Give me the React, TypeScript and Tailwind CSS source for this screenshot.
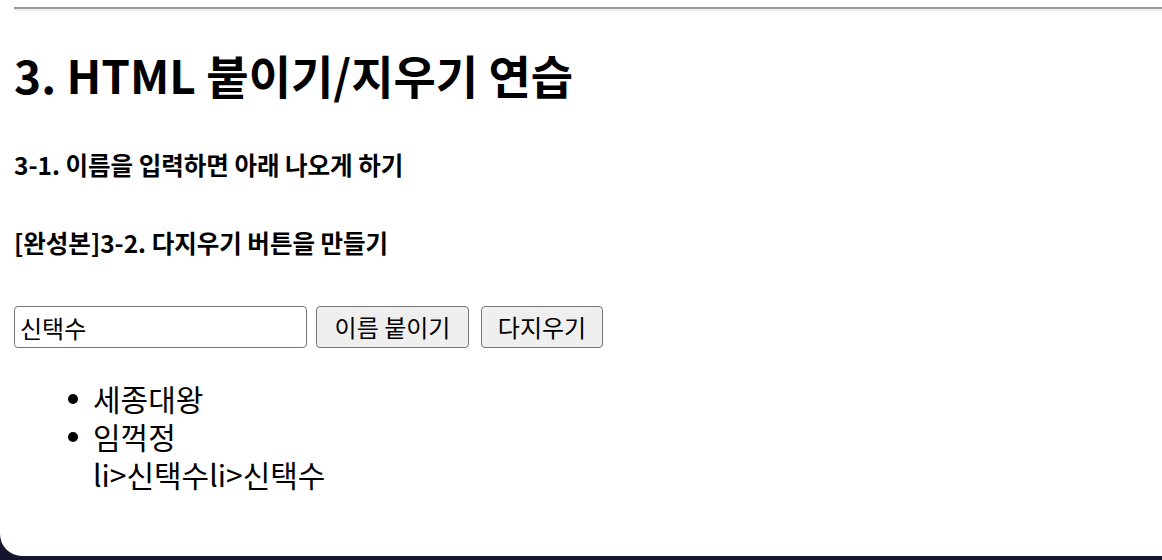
export default function App() {
  return (
    <div className="h-[560px] overflow-hidden bg-[#14142e]">
      <div
        className="h-[556px] rounded-bl-[22px] bg-white pl-[14px] pt-[7px] text-black"
        style={{ fontFamily: '"Noto Sans CJK KR", "Noto Sans", sans-serif' }}
      >
        {/* hr */}
        <div className="border-t-2 border-b-2 border-t-[#9a9a9a] border-b-[#eeeeee]" />

        <h1 className="mt-[35px] text-[46px] font-bold leading-[56px]">3. HTML 붙이기/지우기 연습</h1>

        <h3 className="mt-[48px] text-[24.5px] font-bold leading-[30px]">3-1. 이름을 입력하면 아래 나오게 하기</h3>

        <h3 className="mt-[48px] text-[24.5px] font-bold leading-[30px]">[완성본]3-2. 다지우기 버튼을 만들기</h3>

        <div className="mt-[48px] flex items-start">
          <input
            defaultValue="신택수"
            className="h-[42px] w-[293px] rounded-[4px] border-[1.5px] border-[#767676] px-[5px] text-[24px] text-black outline-none"
          />
          <button className="ml-[9px] h-[42px] w-[153px] rounded-[4px] border-[1.5px] border-[#767676] bg-[#efefef] text-[24px] leading-none">
            이름 붙이기
          </button>
          <button className="ml-[12px] h-[42px] w-[122px] rounded-[4px] border-[1.5px] border-[#767676] bg-[#efefef] text-[24px] leading-none">
            다지우기
          </button>
        </div>

        <ul className="mt-[31px] pl-[79px] text-[30px] leading-[38px]">
          <li className="relative">
            <span className="absolute left-[-25px] top-[15px] h-[10px] w-[10px] rounded-full bg-black" />
            세종대왕
          </li>
          <li className="relative">
            <span className="absolute left-[-25px] top-[15px] h-[10px] w-[10px] rounded-full bg-black" />
            임꺽정
          </li>
          <li>li&gt;신택수li&gt;신택수</li>
        </ul>
      </div>
    </div>
  );
}
